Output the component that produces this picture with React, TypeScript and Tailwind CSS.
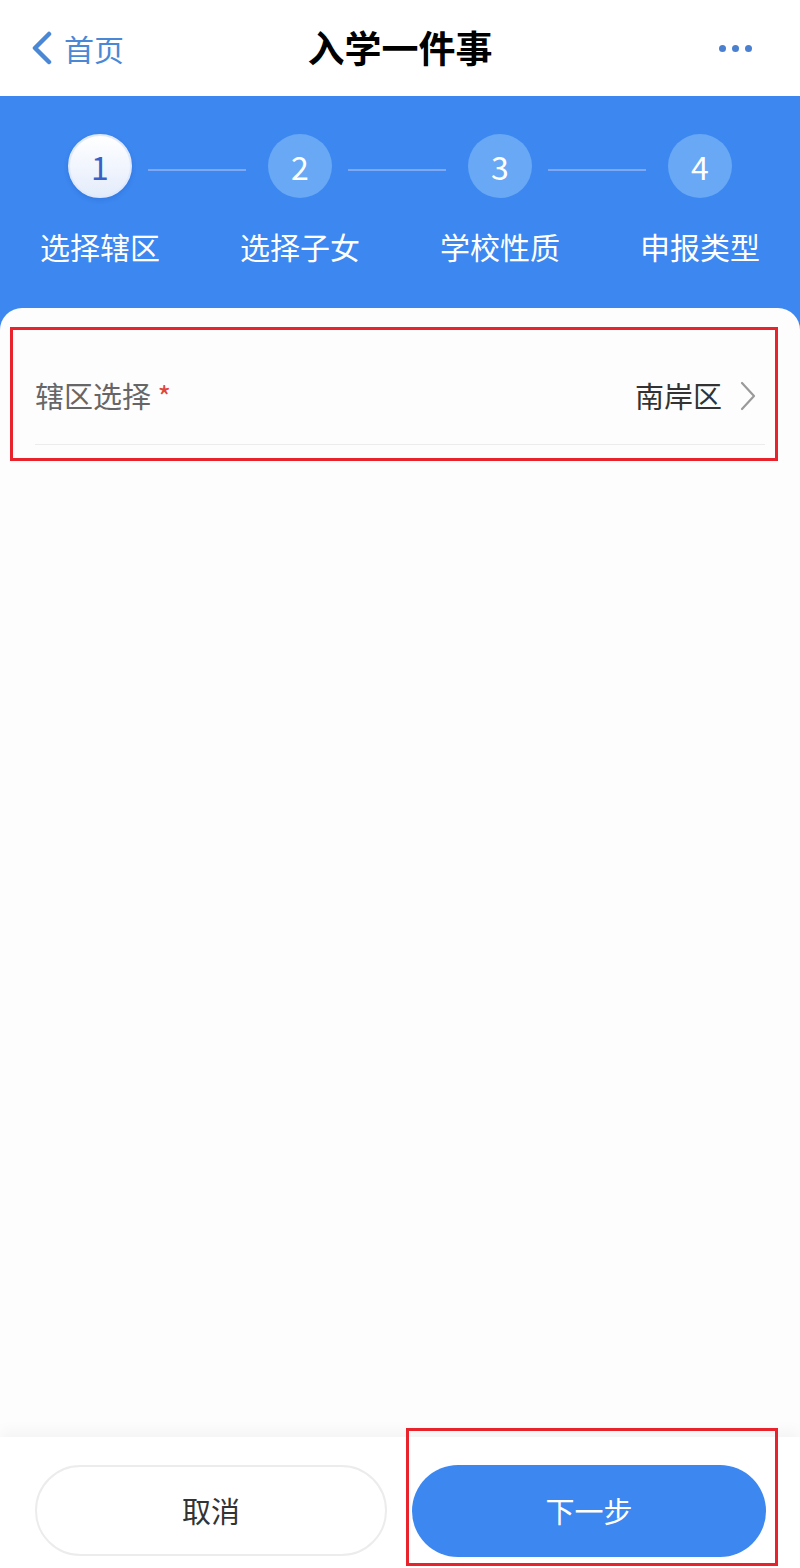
const font = { fontFamily: '"Noto Sans CJK SC", "Noto Sans", sans-serif' };

const steps = ["选择辖区", "选择子女", "学校性质", "申报类型"];

function StepCircle({ n, active }: { n: number; active?: boolean }) {
  if (active) {
    return (
      <div className="flex h-[64px] w-[64px] shrink-0 items-center justify-center rounded-full border-2 border-[#dfe9fb] bg-gradient-to-b from-white to-[#e4ecfb] text-[32px] text-[#3a5fc6] shadow-[0_2px_4px_rgba(30,80,180,0.25)]">
        {n}
      </div>
    );
  }
  return (
    <div className="flex h-[64px] w-[64px] shrink-0 items-center justify-center rounded-full bg-[#68a8f5] text-[32px] text-white">
      {n}
    </div>
  );
}

export default function App() {
  return (
    <div className="flex h-[1568px] w-[800px] flex-col bg-white" style={font}>
      {/* nav bar */}
      <header className="flex h-[96px] shrink-0 items-center justify-between bg-white px-[30px]">
        <div className="flex w-[160px] items-center gap-[10px] text-[30px] text-[#4a88d6]">
          <svg width="24" height="34" viewBox="0 0 24 34" fill="none">
            <path d="M19 3 L5 17 L19 31" stroke="#4a88d6" strokeWidth="4.5" strokeLinecap="round" strokeLinejoin="round" />
          </svg>
          <span>首页</span>
        </div>
        <h1 className="text-[37px] font-bold text-black">入学一件事</h1>
        <div className="flex w-[160px] justify-end gap-[6px] pr-[18px]">
          <span className="h-[7px] w-[7px] rounded-full bg-[#4a80cf]" />
          <span className="h-[7px] w-[7px] rounded-full bg-[#4a80cf]" />
          <span className="h-[7px] w-[7px] rounded-full bg-[#4a80cf]" />
        </div>
      </header>

      {/* steps */}
      <section className="h-[212px] shrink-0 bg-[#3c87f0] pt-[38px]">
        <div className="flex items-center px-[68px]">
          {steps.map((_, i) => (
            <div key={i} className={i < 3 ? "flex flex-1 items-center" : "flex items-center"}>
              <StepCircle n={i + 1} active={i === 0} />
              {i < 3 && <div className="ml-[16px] mr-[22px] mt-[8px] h-[2px] flex-1 bg-[#7ea8f3]" />}
            </div>
          ))}
        </div>
        <div className="mt-[30px] grid grid-cols-4 text-center text-[30px] leading-[36px] text-white">
          {steps.map((s) => (
            <div key={s}>{s}</div>
          ))}
        </div>
      </section>

      {/* form card */}
      <main className="flex flex-1 flex-col bg-[#3c87f0]">
        <div className="relative flex-1 rounded-t-[22px] bg-[#fdfdfd] px-[35px] pt-[40px]">
          <div className="flex h-[97px] items-center justify-between border-b border-[#ececec]">
            <div className="text-[29px] text-[#666]">
              辖区选择 <span className="text-[#e0463e]">*</span>
            </div>
            <div className="flex items-center gap-[18px] pr-[9px] text-[29px] text-[#333]">
              <span>南岸区</span>
              <svg width="16" height="30" viewBox="0 0 16 30" fill="none">
                <path d="M2 2 L14 15 L2 28" stroke="#9a9a9a" strokeWidth="2.2" strokeLinecap="round" strokeLinejoin="round" />
              </svg>
            </div>
          </div>
          {/* annotation box */}
          <div className="pointer-events-none absolute left-[10px] top-[19px] h-[134px] w-[768px] border-[3px] border-[#e8232b]" />
        </div>
      </main>

      {/* bottom bar */}
      <footer className="relative flex h-[131px] shrink-0 items-start gap-[25px] bg-white pl-[35px] pr-[34px] pt-[28px] shadow-[0_-6px_14px_rgba(0,0,0,0.04)]">
        <button className="h-[91px] w-[352px] rounded-full border-2 border-[#ececec] bg-white text-[29px] text-[#333]">
          取消
        </button>
        <button className="h-[92px] w-[354px] rounded-full bg-[#3c87f0] text-[29px] text-white">
          下一步
        </button>
        {/* annotation box */}
        <div className="pointer-events-none absolute left-[406px] top-[-9px] h-[138px] w-[372px] border-[3px] border-[#e8232b]" />
      </footer>
    </div>
  );
}
